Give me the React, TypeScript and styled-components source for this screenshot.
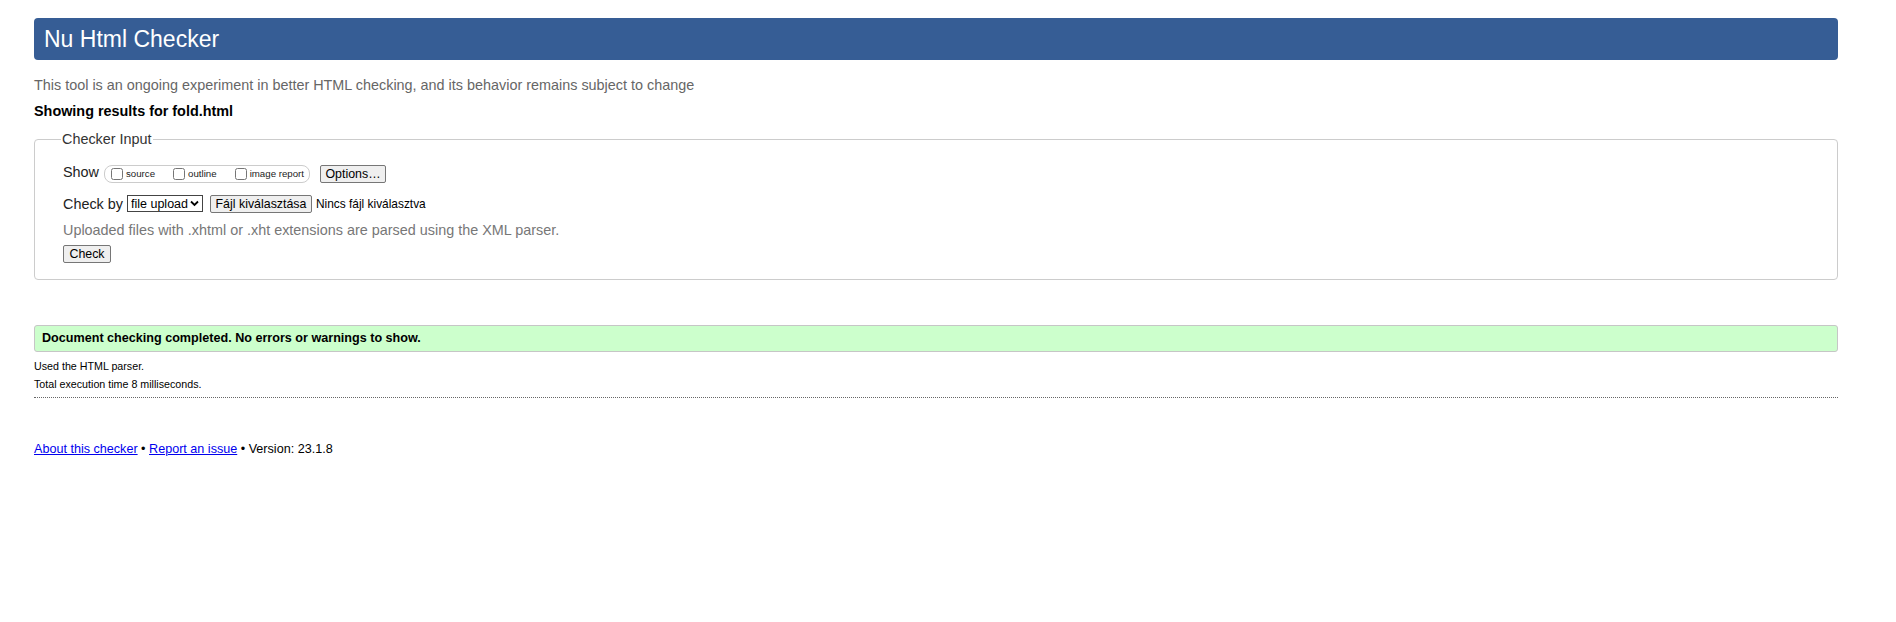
import styled, { createGlobalStyle } from 'styled-components';

const GlobalStyle = createGlobalStyle`
  body {
    margin: 0;
    background: #fff;
    color: #000;
    font-family: "Liberation Sans", Arial, sans-serif;
  }
`;

const Page = styled.div`
  padding: 18px 58px 40px 34px;
`;

const Title = styled.h1`
  margin: 0;
  height: 42px;
  padding: 0 10px;
  background: #365d95;
  border-radius: 4px;
  color: #fff;
  font-size: 23px;
  font-weight: normal;
  line-height: 42px;
`;

const Intro = styled.p`
  margin: 17px 0 0;
  color: #666;
  font-size: 14.4px;
  line-height: 16px;
`;

const ShowingFor = styled.p`
  margin: 10px 0 0;
  font-size: 14.4px;
  font-weight: bold;
  line-height: 16px;
`;

const Fieldset = styled.fieldset`
  margin: 12px 0 0;
  padding: 18px 28px 16px;
  border: 1px solid #ccc;
  border-radius: 4px;
`;

const Legend = styled.legend`
  margin-left: -2px;
  padding: 0 1px;
  color: #333;
  font-size: 14.4px;
  line-height: 16px;
`;

const Row = styled.div<{ $top?: number }>`
  display: flex;
  align-items: center;
  height: 17px;
  margin-top: ${(p) => p.$top ?? 0}px;
  font-size: 14.4px;
  color: #222;
  white-space: nowrap;
`;

const RowLabel = styled.span<{ $lift?: number }>`
  margin-bottom: ${(p) => p.$lift ?? 0}px;
`;

const OptionGroup = styled.span`
  display: inline-flex;
  align-items: center;
  height: 16px;
  margin-left: 5px;
  padding: 0 5px 0 6px;
  border: 1px solid #ccc;
  border-radius: 8px;
`;

const OptionLabel = styled.label`
  display: inline-flex;
  align-items: center;
  margin-right: 18px;
  font-size: 9.7px;
  color: #222;

  &:last-child {
    margin-right: 0;
  }

  input {
    width: 12px;
    height: 12px;
    margin: 0 3px 0 0;
  }
`;

const Button = styled.button<{ $width?: number }>`
  box-sizing: border-box;
  height: 18px;
  width: ${(p) => (p.$width ? `${p.$width}px` : 'auto')};
  margin: 0;
  padding: 0 4px;
  background: #efefef;
  border: 1px solid #767676;
  border-radius: 2px;
  color: #000;
  font-family: inherit;
  font-size: 12.4px;
  line-height: 16px;
  white-space: nowrap;
`;

const OptionsButton = styled(Button)`
  margin-left: 10px;
`;

const FileButton = styled(Button)`
  margin-left: 7px;
`;

const SelectWrap = styled.span`
  position: relative;
  display: inline-block;
  margin-left: 4px;
`;

const Select = styled.select`
  box-sizing: border-box;
  width: 76px;
  height: 17px;
  padding: 0 14px 0 3px;
  appearance: none;
  background: #fff;
  border: 1px solid #444;
  border-radius: 0;
  color: #000;
  font-family: inherit;
  font-size: 12.5px;
`;

const Chevron = styled.svg`
  position: absolute;
  right: 4px;
  top: 5px;
  pointer-events: none;
`;

const NoFile = styled.span`
  margin-left: 4px;
  font-size: 11.9px;
  color: #000;
`;

const Hint = styled.p`
  margin: 10px 0 0;
  color: #777;
  font-size: 14.4px;
  line-height: 16px;
`;

const CheckButton = styled(Button)`
  display: block;
  margin-top: 7px;
`;

const Success = styled.div`
  margin-top: 45px;
  height: 27px;
  box-sizing: border-box;
  padding: 0 7px;
  background: #ccffcc;
  border: 1px solid #c6c6c6;
  border-radius: 3px;
  font-size: 12.6px;
  font-weight: bold;
  line-height: 25px;
`;

const Details = styled.div`
  margin-top: 6px;
  padding-bottom: 4px;
  border-bottom: 1px dotted #666;
  font-size: 10.7px;
  line-height: 17.6px;

  p {
    margin: 0;
  }
`;

const Footer = styled.p`
  margin: 44px 0 0;
  font-size: 12.6px;
  line-height: 15px;

  a {
    color: #0000ee;
  }
`;

const App = () => {
  return (
    <Page>
      <GlobalStyle />
      <Title>Nu Html Checker</Title>
      <Intro>
        This tool is an ongoing experiment in better HTML checking, and its behavior remains subject to change
      </Intro>
      <ShowingFor>Showing results for fold.html</ShowingFor>
      <Fieldset>
        <Legend>Checker Input</Legend>
        <Row>
          <RowLabel $lift={3}>Show</RowLabel>
          <OptionGroup>
            <OptionLabel>
              <input type="checkbox" />
              source
            </OptionLabel>
            <OptionLabel>
              <input type="checkbox" />
              outline
            </OptionLabel>
            <OptionLabel>
              <input type="checkbox" />
              image report
            </OptionLabel>
          </OptionGroup>
          <OptionsButton $width={66}>Options…</OptionsButton>
        </Row>
        <Row $top={13}>
          <RowLabel>Check by</RowLabel>
          <SelectWrap>
            <Select defaultValue="file">
              <option value="address">address</option>
              <option value="file">file upload</option>
              <option value="text">text input</option>
            </Select>
            <Chevron width="9" height="7" viewBox="0 0 9 7">
              <path d="M1 1.5 4.5 5 8 1.5" fill="none" stroke="#000" strokeWidth="1.8" />
            </Chevron>
          </SelectWrap>
          <FileButton $width={102}>Fájl kiválasztása</FileButton>
          <NoFile>Nincs fájl kiválasztva</NoFile>
        </Row>
        <Hint>Uploaded files with .xhtml or .xht extensions are parsed using the XML parser.</Hint>
        <CheckButton $width={48}>Check</CheckButton>
      </Fieldset>
      <Success>Document checking completed. No errors or warnings to show.</Success>
      <Details>
        <p>Used the HTML parser.</p>
        <p>Total execution time 8 milliseconds.</p>
      </Details>
      <Footer>
        <a href="#about">About this checker</a> • <a href="#issue">Report an issue</a> • Version: 23.1.8
      </Footer>
    </Page>
  );
};

export default App;
